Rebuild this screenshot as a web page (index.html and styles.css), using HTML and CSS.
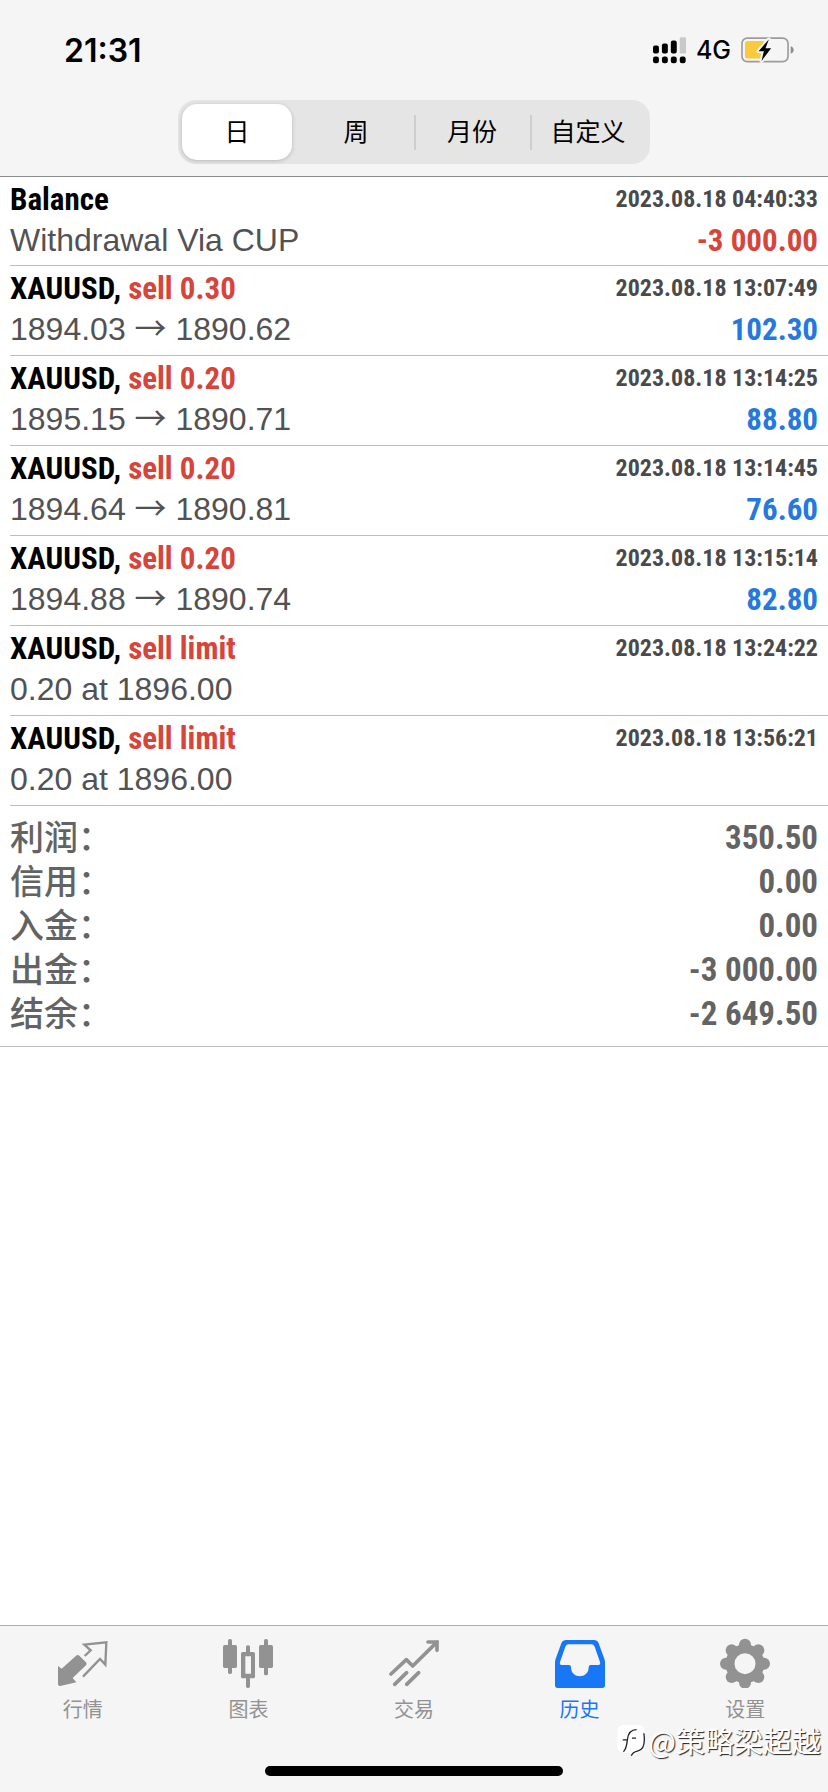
FILE: index.html
```html
<!DOCTYPE html>
<html lang="zh-CN">
<head>
<meta charset="utf-8">
<meta name="viewport" content="width=device-width, initial-scale=1">
<title>历史</title>
<link rel="stylesheet" href="styles.css">
</head>
<body>
<header class="top">
  <div class="status">
    <time class="clock">21:31</time>
    <div class="indicators">
      <svg class="signal" viewBox="0 0 100 80" aria-hidden="true">
        <rect x="0" y="25" width="18" height="24" rx="6"/><rect x="27" y="19" width="18" height="30" rx="6"/><rect x="54" y="10" width="18" height="39" rx="6"/><rect x="81" y="0" width="19" height="49" rx="4" fill="#c9c9c9"/>
        <rect x="0" y="58" width="18" height="21" rx="7"/><rect x="27" y="58" width="18" height="21" rx="7"/><rect x="54" y="58" width="18" height="21" rx="7"/><rect x="81" y="58" width="18" height="21" rx="7"/>
      </svg>
      <span class="network">4G</span>
      <svg class="battery" viewBox="0 0 160 78" aria-hidden="true">
        <rect x="3" y="3" width="139" height="71" rx="16" fill="none" stroke="#9c9c9c" stroke-width="5"/>
        <rect x="12" y="12" width="62" height="53" rx="8" fill="#f9cb3c"/>
        <path d="M150 28q9 3 9 11t-9 11z" fill="#8e8e8e"/>
        <path d="M84 7 53 43h16l-7 29 29-38H74z" stroke="#f5f5f5" stroke-width="12" stroke-linejoin="round"/>
        <path d="M84 7 53 43h16l-7 29 29-38H74z"/>
      </svg>
    </div>
  </div>
  <div class="segments" role="group" aria-label="时间范围">
    <button class="segment selected" type="button" aria-pressed="true">日</button>
    <button class="segment" type="button">周</button>
    <button class="segment divided" type="button">月份</button>
    <button class="segment divided" type="button">自定义</button>
  </div>
</header>

<main class="content">
  <ul class="deals">
    <li class="deal"><div class="line"><strong class="name">Balance</strong><time class="date">2023.08.18 04:40:33</time></div><div class="line"><span class="detail">Withdrawal Via CUP</span><span class="amount loss">-3 000.00</span></div></li>
    <li class="deal"><div class="line"><strong class="name">XAUUSD, <span class="loss">sell 0.30</span></strong><time class="date">2023.08.18 13:07:49</time></div><div class="line"><span class="detail">1894.03 <span class="arrow">→</span> 1890.62</span><span class="amount">102.30</span></div></li>
    <li class="deal"><div class="line"><strong class="name">XAUUSD, <span class="loss">sell 0.20</span></strong><time class="date">2023.08.18 13:14:25</time></div><div class="line"><span class="detail">1895.15 <span class="arrow">→</span> 1890.71</span><span class="amount">88.80</span></div></li>
    <li class="deal"><div class="line"><strong class="name">XAUUSD, <span class="loss">sell 0.20</span></strong><time class="date">2023.08.18 13:14:45</time></div><div class="line"><span class="detail">1894.64 <span class="arrow">→</span> 1890.81</span><span class="amount">76.60</span></div></li>
    <li class="deal"><div class="line"><strong class="name">XAUUSD, <span class="loss">sell 0.20</span></strong><time class="date">2023.08.18 13:15:14</time></div><div class="line"><span class="detail">1894.88 <span class="arrow">→</span> 1890.74</span><span class="amount">82.80</span></div></li>
    <li class="deal"><div class="line"><strong class="name">XAUUSD, <span class="loss">sell limit</span></strong><time class="date">2023.08.18 13:24:22</time></div><div class="line"><span class="detail">0.20 at 1896.00</span></div></li>
    <li class="deal"><div class="line"><strong class="name">XAUUSD, <span class="loss">sell limit</span></strong><time class="date">2023.08.18 13:56:21</time></div><div class="line"><span class="detail">0.20 at 1896.00</span></div></li>
  </ul>
  <dl class="summary">
    <div class="total"><dt>利润：</dt><dd>350.50</dd></div>
    <div class="total"><dt>信用：</dt><dd>0.00</dd></div>
    <div class="total"><dt>入金：</dt><dd>0.00</dd></div>
    <div class="total"><dt>出金：</dt><dd>-3 000.00</dd></div>
    <div class="total"><dt>结余：</dt><dd>-2 649.50</dd></div>
  </dl>
</main>

<footer class="bottom">
  <nav class="tabs">
    <button class="tab" type="button">
      <svg class="icon" viewBox="0 0 150 150" aria-hidden="true"><path d="M0 84 11 92 56 52Q60 49 64 53L84 73Q88 77 84 82L44 120 55 133 7 144Q0 145 0 138Z"/><path d="M80 54 98 37 79 20 145 13 142 80 126 63 75 116" fill="none" stroke="currentColor" stroke-width="7"/></svg>
      <span>行情</span>
    </button>
    <button class="tab" type="button">
      <svg class="icon" viewBox="0 0 150 150" aria-hidden="true"><rect x="0" y="21" width="42" height="69" rx="5"/><rect x="15" y="3" width="12" height="105" rx="5"/><path fill-rule="evenodd" d="M59 42h32q5 0 5 5v69q0 5-5 5H59q-5 0-5-5V47q0-5 5-5zM67 55v52h17V55z"/><rect x="69" y="22" width="12" height="23" rx="5"/><rect x="69" y="118" width="12" height="32" rx="5"/><rect x="108" y="21" width="42" height="69" rx="5"/><rect x="123" y="3" width="12" height="109" rx="5"/></svg>
      <span>图表</span>
    </button>
    <button class="tab" type="button">
      <svg class="icon" viewBox="0 0 150 150" aria-hidden="true"><g fill="none" stroke="currentColor" stroke-width="11" stroke-linecap="round" stroke-linejoin="round"><path d="M6 108 52 65 71 84 143 13"/><path d="M117 12h27v25" stroke-linejoin="miter"/><path d="M17 139 53 104M53 139 89 104"/></g></svg>
      <span>交易</span>
    </button>
    <button class="tab active" type="button" aria-current="page">
      <svg class="icon" viewBox="0 0 150 150" aria-hidden="true"><path fill-rule="evenodd" d="M34 6H116Q127 6 131 16L148 62Q150 68 150 74V142Q150 150 142 150H8Q0 150 0 142V74Q0 68 2 62L19 16Q23 6 34 6ZM41 19Q34 19 31 26L15 72Q13 81 20 81H42Q48 81 48 88C48 124 101 124 101 88Q101 81 107 81H130Q137 81 135 72L119 26Q116 19 109 19Z"/></svg>
      <span>历史</span>
    </button>
    <button class="tab" type="button">
      <svg class="icon" viewBox="0 0 150 150" aria-hidden="true"><circle cx="75" cy="77" r="45" fill="none" stroke="currentColor" stroke-width="27"/><circle cx="75" cy="20" r="18"/><circle cx="115" cy="37" r="18"/><circle cx="132" cy="77" r="18"/><circle cx="115" cy="117" r="18"/><circle cx="75" cy="134" r="18"/><circle cx="35" cy="117" r="18"/><circle cx="18" cy="77" r="18"/><circle cx="35" cy="37" r="18"/></svg>
      <span>设置</span>
    </button>
  </nav>
  <div class="home-bar"></div>
  <div class="watermark">
    <svg class="mark" viewBox="0 0 90 100" aria-hidden="true"><path d="M24 3H68Q86 3 86 22V60Q86 80 68 84L47 97 43 86H18Q4 82 4 64V22Q4 3 24 3Z" fill="#fff"/><path d="M22 84Q31 76 34 48 37 17 62 17M20 48H34M48 43H60M84 28Q91 78 65 82 50 85 46 96" fill="none" stroke="#222" stroke-width="4"/></svg>
    <span>@策略梁超越</span>
  </div>
</footer>
</body>
</html>
```

FILE: styles.css
```css
* {
  box-sizing: border-box;
}

body {
  margin: 0;
  min-height: 100vh;
  display: flex;
  flex-direction: column;
  background: #fff;
  color: #000;
  font-family: "Liberation Sans", "Noto Sans CJK SC", sans-serif;
}

button {
  margin: 0;
  padding: 0;
  border: 0;
  background: none;
  font: inherit;
  color: inherit;
}

.top {
  display: flex;
  flex-direction: column;
  align-items: center;
  padding-bottom: 12px;
  background: #f5f5f5;
  border-bottom: 1px solid #8c8c8c;
}

.status {
  align-self: stretch;
  display: flex;
  justify-content: space-between;
  align-items: center;
  height: 100px;
  padding: 0 34px 0 64px;
  font-family: Inter, sans-serif;
}

.clock {
  font-size: 32px;
  font-weight: 600;
}

.indicators {
  display: flex;
  align-items: center;
  gap: 10px;
}

.signal {
  width: 33px;
  height: 27px;
}

.network {
  font-size: 25px;
  font-weight: 500;
}

.battery {
  width: 53px;
  height: 26px;
}

.segments {
  display: grid;
  grid-template-columns: repeat(4, 1fr);
  width: 57%;
  height: 64px;
  padding: 4px;
  border-radius: 18px;
  background: #e5e5e6;
}

.segment {
  display: flex;
  align-items: center;
  justify-content: center;
  font-size: 25px;
  line-height: 36px;
  padding-bottom: 1px;
}

.selected {
  margin-right: 6px;
  border-radius: 15px;
  background: #fff;
  box-shadow: 0 1px 4px rgba(0, 0, 0, 0.2);
  font-family: "Liberation Sans", "Noto Sans CJK SC", sans-serif;
}

.divided {
  background: linear-gradient(#cecece, #cecece) left center / 2px 35px no-repeat;
}

.content {
  flex: 1;
}

.deals {
  margin: 0;
  padding: 0 0 0 10px;
  list-style: none;
}

.deal {
  padding: 2px 10px 5px 0;
  border-bottom: 1px solid #bdbdbd;
}

.deal:first-child {
  padding-bottom: 4px;
}

.line {
  display: flex;
  justify-content: space-between;
  height: 41px;
  line-height: 41px;
}

.name,
.date,
.amount,
.total dd {
  font-family: "Liberation Sans Narrow", "Roboto Condensed", "Liberation Sans", sans-serif;
  font-weight: 700;
}

.name {
  font-size: 31px;
}

.date {
  font-size: 24px;
  color: #4a4a4c;
}

.amount {
  font-size: 31px;
  color: #2478de;
}

.loss {
  color: #d6443a;
}

.detail {
  font-size: 32px;
  color: #525254;
}

.arrow {
  font-family: "Noto Sans CJK SC", sans-serif;
  line-height: 1;
}

.summary {
  margin: 0;
  padding: 10px;
  border-bottom: 1px solid #bdbdbd;
  color: #636363;
}

.total {
  display: flex;
  justify-content: space-between;
  line-height: 44px;
}

.total dt {
  font-size: 34px;
  font-weight: 500;
}

.total dd {
  margin: 0;
  font-size: 33px;
}

.bottom {
  position: relative;
  background: #f5f5f5;
  border-top: 1px solid #acacac;
  padding: 12px 0 16px;
}

.tabs {
  display: grid;
  grid-template-columns: repeat(5, 1fr);
}

.tab {
  display: flex;
  flex-direction: column;
  align-items: center;
  gap: 6px;
  color: #929292;
  font-family: "Noto Sans CJK SC", sans-serif;
  font-size: 20px;
  line-height: 30px;
}

.active {
  color: #1777f5;
}

.icon {
  width: 50px;
  height: 50px;
  fill: currentColor;
}

.home-bar {
  width: 36%;
  height: 10px;
  margin: 42px auto 0;
  border-radius: 5px;
  background: #000;
}

.watermark {
  position: absolute;
  right: 7px;
  bottom: 32px;
  display: flex;
  align-items: center;
  gap: 3px;
  color: #fff;
  font-family: "Noto Sans CJK SC", sans-serif;
  font-size: 29px;
  line-height: 40px;
  text-shadow: 1px 1px 1px #222;
}

.mark {
  width: 30px;
  height: 33px;
}
```
